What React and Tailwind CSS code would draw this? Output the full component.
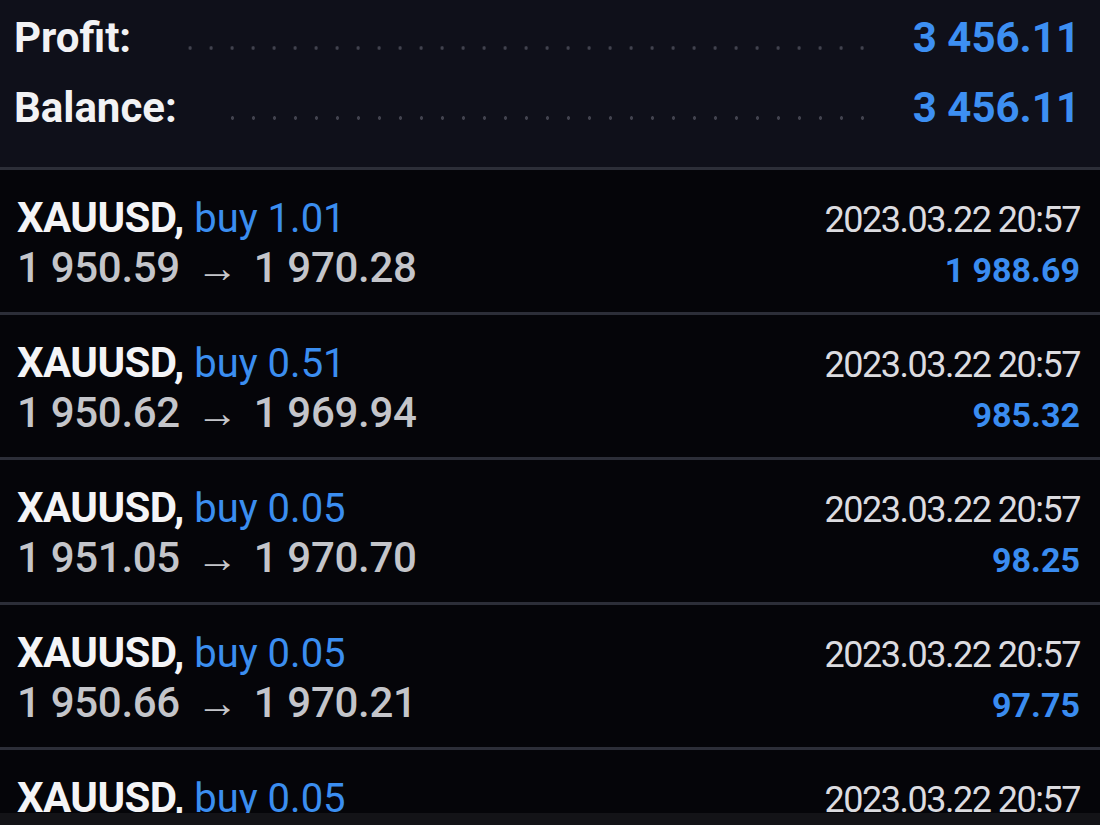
import React from 'react';

const summary = [
  { label: 'Profit:', value: '3 456.11', dotsLeft: 'ml-[52px]' },
  { label: 'Balance:', value: '3 456.11', dotsLeft: 'ml-[54px]' },
];

const deals = [
  { lot: '1.01', open: '1 950.59', close: '1 970.28', time: '2023.03.22 20:57', profit: '1 988.69' },
  { lot: '0.51', open: '1 950.62', close: '1 969.94', time: '2023.03.22 20:57', profit: '985.32' },
  { lot: '0.05', open: '1 951.05', close: '1 970.70', time: '2023.03.22 20:57', profit: '98.25' },
  { lot: '0.05', open: '1 950.66', close: '1 970.21', time: '2023.03.22 20:57', profit: '97.75' },
  { lot: '0.05', open: '1 950.70', close: '1 970.21', time: '2023.03.22 20:57', profit: '97.55' },
];

const DealRow = ({ deal }) => (
  <div className="border-t-[3px] border-[#2c2e38] pl-[17px] pr-[20px] pt-[23px] pb-[19px]">
    <div className="flex h-[50px] items-baseline justify-between leading-[50px]">
      <div className="text-[42px]">
        <span className="font-bold tracking-[-0.6px] text-[#f4f4f6]">XAUUSD,</span>{' '}
        <span className="text-[40px] text-[#3b8ef0]">buy {deal.lot}</span>
      </div>
      <div className="text-[36px] tracking-[-1.5px] text-[#dcdce0]">{deal.time}</div>
    </div>
    <div className="flex h-[50px] items-baseline justify-between leading-[50px]">
      <div className="text-[42px] font-medium tracking-[-0.3px] text-[#c4c5ca]">
        {deal.open}
        <span className="mx-[16px] text-[42px] font-normal">→</span>
        {deal.close}
      </div>
      <div className="text-[34px] font-bold text-[#3a8cf0]">{deal.profit}</div>
    </div>
  </div>
);

const App = () => {
  return (
    <div className="flex h-[825px] flex-col overflow-hidden bg-[#050509] [font-family:Roboto,sans-serif]">
      <div className="bg-[#0f101a] pl-[14px] pr-[20px] pt-[3px] pb-[24px]">
        {summary.map((row) => (
          <div key={row.label} className="flex h-[70px] items-baseline leading-[70px]">
            <span className="text-[42px] font-bold text-[#f2f2f4]">{row.label}</span>
            <div
              className={`${row.dotsLeft} mr-[40px] h-[6px] flex-1 self-center translate-y-[10px] bg-[radial-gradient(circle,#41424e_1.5px,transparent_2px)] bg-[length:21px_6px] bg-right bg-repeat-x`}
            />
            <span className="text-[42px] font-bold text-[#3d8ff2]">{row.value}</span>
          </div>
        ))}
      </div>
      <div className="flex-1 overflow-hidden">
        {deals.map((deal, i) => (
          <DealRow key={i} deal={deal} />
        ))}
      </div>
      <div className="h-[12px] bg-[#131317]" />
    </div>
  );
};

export default App;
